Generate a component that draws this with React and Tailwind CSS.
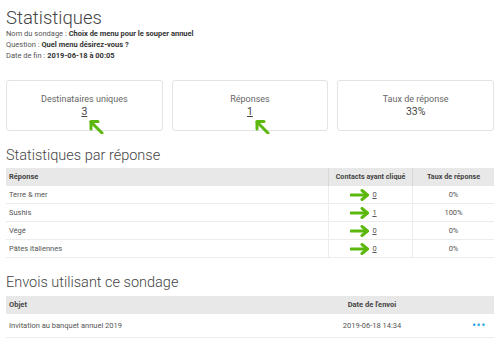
import React from "react";

const green = "#5cb80f";

const UpLeftArrow = ({ className }) => (
  <svg viewBox="0 0 16 16" className={className} fill="none">
    <path d="M14 15 L3 4" stroke={green} strokeWidth="3" strokeLinecap="round" />
    <path d="M3 11 L3 3.5 L10 3.5" stroke={green} strokeWidth="3" strokeLinecap="round" strokeLinejoin="round" />
  </svg>
);

const RightArrow = () => (
  <svg viewBox="0 0 20 12" className="w-[20px] h-[12px]" fill="none">
    <path d="M1 6 L17 6" stroke={green} strokeWidth="3" strokeLinecap="round" />
    <path d="M12 1.5 L17.5 6 L12 10.5" stroke={green} strokeWidth="3" strokeLinecap="round" strokeLinejoin="round" />
  </svg>
);

const cards = [
  { label: "Destinataires uniques", value: "3", link: true },
  { label: "Réponses", value: "1", link: true },
  { label: "Taux de réponse", value: "33%", link: false },
];

const rows = [
  { name: "Terre & mer", count: "0", rate: "0%" },
  { name: "Sushis", count: "1", rate: "100%" },
  { name: "Végé", count: "0", rate: "0%" },
  { name: "Pâtes italiennes", count: "0", rate: "0%" },
];

export default function App() {
  return (
    <div className="w-[500px] h-[346px] overflow-hidden bg-white px-[6px] text-[#555] font-['Roboto',sans-serif]">
      <h1 className="text-[18.5px] leading-[20px] font-light text-[#444] pt-[8px]">Statistiques</h1>
      <div className="text-[7.5px] leading-[11px]">
        <p>
          Nom du sondage : <b className="text-[#333]">Choix de menu pour le souper annuel</b>
        </p>
        <p>
          Question : <b className="text-[#333]">Quel menu désirez-vous ?</b>
        </p>
        <p>
          Date de fin : <b className="text-[#333]">2019-06-18 à 00:05</b>
        </p>
      </div>

      <div className="grid grid-cols-3 gap-[9px] mt-[19px]">
        {cards.map((c) => (
          <div
            key={c.label}
            className="relative h-[51px] border border-[#e3e3e3] rounded-[3px] flex flex-col items-center justify-center"
          >
            <span className="text-[9px] leading-[12px] text-[#666]">{c.label}</span>
            <span className={`text-[10.5px] leading-[13px] text-[#444] ${c.link ? "underline" : ""}`}>
              {c.value}
            </span>
            {c.link && (
              <UpLeftArrow className="absolute w-[16px] h-[16px] left-1/2 top-[37px] translate-x-[4px]" />
            )}
          </div>
        ))}
      </div>

      <h2 className="text-[14.5px] leading-[18px] font-light text-[#444] mt-[16px]">Statistiques par réponse</h2>
      <div className="mt-[3px] text-[7.5px]">
        <div className="flex h-[18px] bg-[#e8e8e8] font-bold text-[#444] items-center">
          <div className="flex-1 pl-[3px]">Réponse</div>
          <div className="w-[84px] h-full flex items-center justify-center border-l border-[#d8d8d8] text-[7.2px]">
            Contacts ayant cliqué
          </div>
          <div className="w-[82px] h-full flex items-center justify-center border-l border-[#d8d8d8] text-[7.2px]">
            Taux de réponse
          </div>
        </div>
        {rows.map((r) => (
          <div key={r.name} className="flex h-[18px] items-center border-b border-[#ececec]">
            <div className="flex-1 pl-[3px]">{r.name}</div>
            <div className="w-[84px] h-full flex items-center justify-center gap-[2px] border-l border-[#ececec]">
              <span className="-ml-[14px]">
                <RightArrow />
              </span>
              <span className="underline text-[#555]">{r.count}</span>
            </div>
            <div className="w-[82px] h-full flex items-center justify-center border-l border-[#ececec]">
              {r.rate}
            </div>
          </div>
        ))}
      </div>

      <h2 className="text-[14.5px] leading-[18px] font-light text-[#444] mt-[16px]">Envois utilisant ce sondage</h2>
      <div className="mt-[4px] text-[7.5px]">
        <div className="flex h-[18px] bg-[#e8e8e8] font-bold text-[#444] items-center">
          <div className="flex-1 pl-[3px]">Objet</div>
          <div className="w-[104px] text-center">Date de l'envoi</div>
          <div className="w-[70px]"></div>
        </div>
        <div className="flex h-[24px] items-center border-b border-[#ececec]">
          <div className="flex-1 pl-[3px]">Invitation au banquet annuel 2019</div>
          <div className="w-[104px] text-center">2019-06-18 14:34</div>
          <div className="w-[70px] flex justify-end pr-[8px] text-[#2aa6df] font-bold tracking-[1px] text-[10px]">
            •••
          </div>
        </div>
      </div>
    </div>
  );
}
